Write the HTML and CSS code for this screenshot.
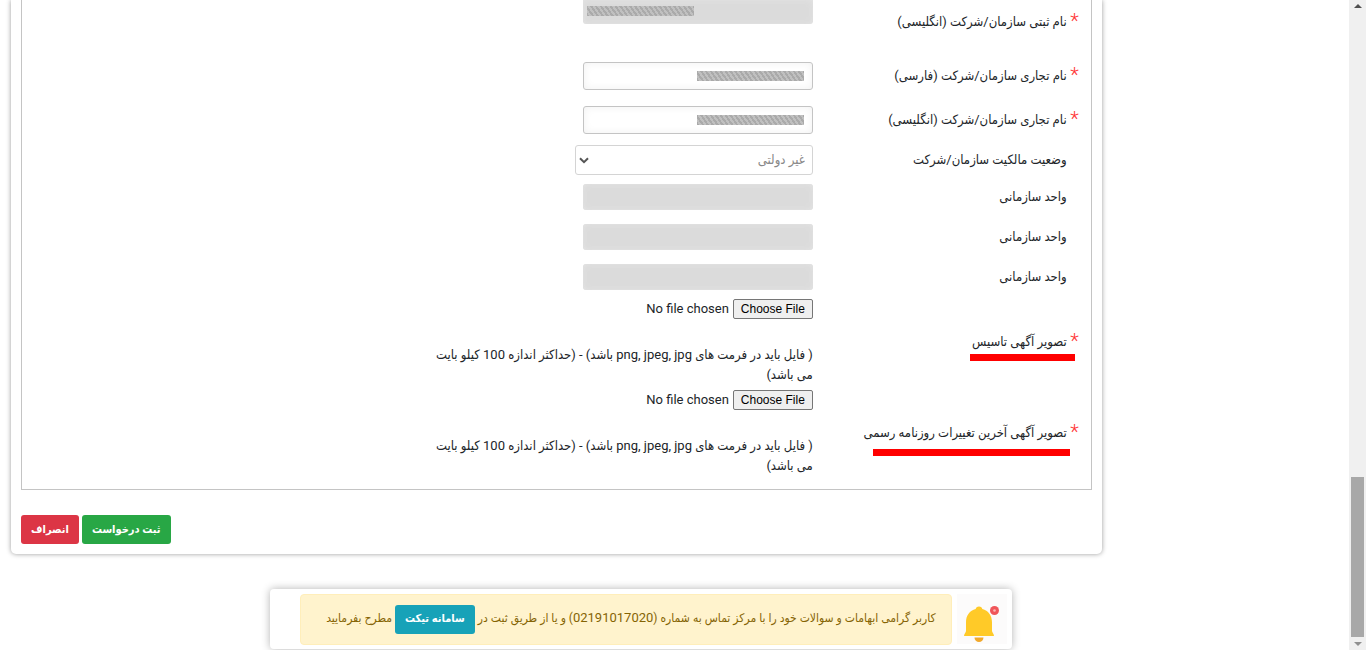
FILE: index.html
```
<!DOCTYPE html>
<html lang="fa" dir="rtl">
  <head>
    <meta charset="utf-8" />
    <title>ثبت درخواست</title>
    <link rel="stylesheet" href="styles.css" />
  </head>
  <body>
    <div class="scrollbar" aria-hidden="true">
      <span class="arrow up"></span>
      <span class="thumb"></span>
      <span class="arrow down"></span>
    </div>
    <div class="page">
      <form class="card">
        <div class="fields">
          <div class="row first">
            <label for="regNameEn"><span class="star">*</span>نام ثبتی سازمان/شرکت (انگلیسی)</label>
            <div class="field"><input type="text" id="regNameEn" class="text masked ltr" disabled /></div>
          </div>
          <div class="row">
            <label for="tradeNameFa"><span class="star">*</span>نام تجاری سازمان/شرکت (فارسی)</label>
            <div class="field"><input type="text" id="tradeNameFa" class="text masked" /></div>
          </div>
          <div class="row">
            <label for="tradeNameEn"><span class="star">*</span>نام تجاری سازمان/شرکت (انگلیسی)</label>
            <div class="field"><input type="text" id="tradeNameEn" class="text masked" /></div>
          </div>
          <div class="row select-row">
            <label for="ownership">وضعیت مالکیت سازمان/شرکت</label>
            <div class="field select-field">
              <select id="ownership">
                <option>غیر دولتی</option>
                <option>دولتی</option>
              </select>
              <svg class="chevron" viewBox="0 0 10 7"><path d="M1 1.2l4 4 4-4" /></svg>
            </div>
          </div>
          <div class="row unit">
            <label for="unit1">واحد سازمانی</label>
            <div class="field"><input type="text" id="unit1" class="text" disabled /></div>
          </div>
          <div class="row unit">
            <label for="unit2">واحد سازمانی</label>
            <div class="field"><input type="text" id="unit2" class="text" disabled /></div>
          </div>
          <div class="row unit">
            <label for="unit3">واحد سازمانی</label>
            <div class="field"><input type="text" id="unit3" class="text" disabled /></div>
          </div>
          <div class="row upload">
            <label for="foundingFile" class="marked"><span class="star">*</span>تصویر آگهی تاسیس</label>
            <div class="field">
              <input type="file" id="foundingFile" />
              <p>( فایل باید در فرمت های png, jpeg, jpg باشد) - (حداکثر اندازه 100 کیلو بایت می باشد)</p>
            </div>
          </div>
          <div class="row upload">
            <label for="changesFile" class="marked wide"><span class="star">*</span>تصویر آگهی آخرین تغییرات روزنامه رسمی</label>
            <div class="field">
              <input type="file" id="changesFile" />
              <p>( فایل باید در فرمت های png, jpeg, jpg باشد) - (حداکثر اندازه 100 کیلو بایت می باشد)</p>
            </div>
          </div>
        </div>
        <div class="actions">
          <button type="submit" class="btn success">ثبت درخواست</button>
          <button type="button" class="btn danger">انصراف</button>
        </div>
      </form>
      <div class="notice">
        <svg class="bell" viewBox="0 0 50 50">
          <rect width="50" height="50" fill="#fcfbfb" />
          <path d="M17.5 43.500h9a4.500 4.500 0 0 1-9 0z" fill="#f2a92c" />
          <path d="M22 12.500c2 0 3 1.200 3.300 2.600 6 1.600 9.700 6.400 9.700 13.400v8.500c0 1.500 2 2.500 2 5H7c0-2.500 2-3.500 2-5v-8.500c0-7 3.700-11.800 9.700-13.400C19 13.700 20 12.500 22 12.500z" fill="#ffca28" />
          <circle cx="37.500" cy="16.500" r="4.500" fill="#f0565a" />
          <circle cx="37.500" cy="16.500" r="1.300" fill="#f9b5b5" />
        </svg>
        <div class="alert">
          کاربر گرامی ابهامات و سوالات خود را با مرکز تماس به شماره (<span class="phone">02191017020</span>) و یا از طریق ثبت در
          <a href="#" class="btn info">سامانه تیکت</a>
          مطرح بفرمایید
        </div>
      </div>
    </div>
  </body>
</html>
```
FILE: styles.css
```
* {
  box-sizing: border-box;
}

body {
  display: flex;
  height: 100vh;
  margin: 0;
  overflow: hidden;
  background: #fff;
  color: #212529;
  font-family: Roboto, "DejaVu Sans Condensed", "DejaVu Sans", sans-serif;
  font-size: 13px;
  line-height: 20px;
}

.scrollbar {
  display: flex;
  flex-direction: column;
  align-items: center;
  justify-content: space-between;
  width: 17px;
  padding: 4px 0;
  background: #f0f0f0;
}

.thumb {
  width: 13px;
  height: 25%;
  margin: auto 0 5px;
  background: #a8a8a8;
}

.arrow {
  border: 4px solid transparent;
}

.up {
  border-top: 0;
  border-bottom-color: #505050;
}

.down {
  border-bottom: 0;
  border-top-color: #909090;
}

.page {
  flex: 1;
  min-width: 0;
}

.card {
  width: calc(81% - 2px);
  margin: 0 auto 35px 11px;
  padding: 0 10px 10px;
  border-radius: 0 0 5px 5px;
  box-shadow: 0 0 5px rgba(0, 0, 0, 0.4);
}

.fields {
  padding-bottom: 8px;
  border: 1px solid #c4c4c4;
  border-top: 0;
}

.row {
  display: grid;
  grid-template-columns: 26% 36%;
  align-items: center;
  padding: 8px 0;
}

.row label {
  position: relative;
  justify-self: start;
  margin-right: 24px;
}

.star {
  position: absolute;
  top: -1px;
  right: -12px;
  color: #f33;
  font-size: 20px;
  font-weight: 300;
}

.first {
  align-items: start;
  padding: 0 0 20px;
}

.first label {
  margin-top: 12px;
  margin-bottom: 2px;
}

.text {
  display: block;
  width: 230px;
  height: 28px;
  padding: 4px 8px;
  border: 1px solid #c4c4c4;
  border-radius: 3px;
  background-color: #fff;
  box-shadow: inset 0 0 8px rgba(0, 0, 0, 0.06);
  font: inherit;
}

.text:disabled {
  height: 26px;
  border: 0;
  background-color: #dbdbdb;
  box-shadow: inset 0 0 6px #e4e4e4;
}

.masked {
  background-image: repeating-linear-gradient(55deg, #aaa 0 2px, #c0c0c0 2px 4px);
  background-position: right 8px center;
  background-repeat: no-repeat;
  background-size: 107px 10px;
}

.first .text {
  height: 24px;
  border-radius: 0 0 3px 3px;
  background-position: left 4px top 6px;
}

.select-row {
  padding: 3px 0 4px;
}

.select-field {
  position: relative;
  width: 238px;
}

select {
  display: block;
  width: 100%;
  height: 30px;
  padding: 0 7px;
  border: 1px solid #d4d4d4;
  border-radius: 3px;
  background: #fff;
  color: #888;
  font: inherit;
  appearance: none;
}

.chevron {
  position: absolute;
  top: 12px;
  left: 4px;
  width: 10px;
  fill: none;
  stroke: #555;
  stroke-width: 2;
}

.unit {
  padding: 5px 0 9px;
}

.upload {
  padding: 0 0 5px;
}

.upload input {
  display: block;
  height: 20px;
  font-family: Roboto, sans-serif;
  font-size: 13px;
}

.upload input::file-selector-button {
  width: 80px;
  height: 20px;
  padding: 0;
  border: 1px solid #767676;
  border-radius: 2px;
  background: #efefef;
  color: #000;
  font: 12px "Liberation Sans", sans-serif;
}

.upload p {
  margin: 26px 0 0;
}

.marked::after {
  content: "";
  position: absolute;
  top: 22px;
  right: -8px;
  width: 105px;
  height: 7px;
  background: #f00;
}

.marked.wide::after {
  top: 26px;
  right: -3px;
  width: 197px;
}

.actions {
  display: flex;
  justify-content: flex-end;
  gap: 3px;
  padding-top: 25px;
}

.btn {
  display: inline-block;
  height: 29px;
  padding: 4px 10px;
  border: 0;
  border-radius: 3px;
  color: #fff;
  font: bold 11px/20px Roboto, "DejaVu Sans Condensed", "DejaVu Sans", sans-serif;
  text-decoration: none;
}

.success {
  background: #28a745;
}

.danger {
  background: #dc3545;
}

.info {
  background: #17a2b8;
}

.notice {
  display: flex;
  width: 55%;
  margin: 0 auto 0 20%;
  padding: 5px 5px 4px;
  border-radius: 4px;
  box-shadow: 0 0 8px rgba(0, 0, 0, 0.3);
}

.bell {
  width: 50px;
  height: 50px;
  flex: none;
}

.alert {
  flex: 1;
  margin: 0 5px 0 25px;
  padding: 10px 15px;
  border: 1px solid #ffeeba;
  border-radius: 4px;
  background: #fff3cd;
  color: #856404;
  font-size: 12px;
  white-space: nowrap;
}

.phone {
  font-size: 13px;
}
```
